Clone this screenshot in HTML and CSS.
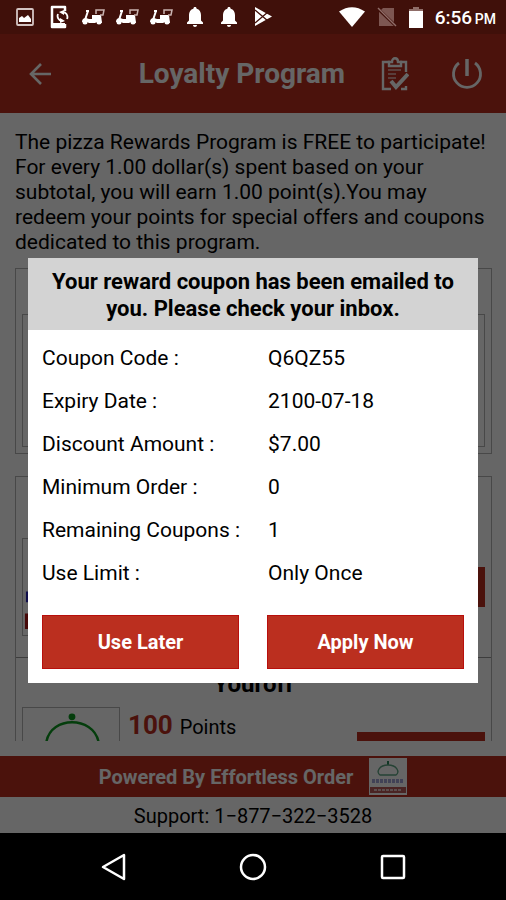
FILE: index.html
```html
<!DOCTYPE html>
<html lang="en">
<head>
<meta charset="utf-8">
<meta name="viewport" content="width=device-width, initial-scale=1">
<title>Loyalty Program</title>
<link rel="stylesheet" href="styles.css">
</head>
<body>
<svg class="defs" aria-hidden="true">
  <symbol id="scooter" viewBox="0 0 24 18">
    <path d="M5 3h3M7 3L4 12" fill="none" stroke="#fff" stroke-width="2"/>
    <path d="M1 14q0-4 4-4l3 1h3V7h9l1 8h-4l-1-1-2 1H8l-2-1z" fill="#fff"/>
    <path d="M15 6V2h8l-1 5h-3" fill="none" stroke="#c9b3b0" stroke-width="1.500"/>
    <circle cx="4" cy="14" r="2.500" fill="#fff"/><circle cx="18" cy="14" r="2.500" fill="#fff"/>
  </symbol>
  <symbol id="bell" viewBox="0 0 18 22">
    <path d="M9 1c1 0 1.600.7 1.600 1.700C13.500 3.400 15 6 15 9v5.500l2 2V18H1v-1.500l2-2V9c0-3 1.500-5.600 4.400-6.300C7.400 1.700 8 1 9 1zM7 19h4c0 1.200-.9 2-2 2s-2-.8-2-2z" fill="#fff"/>
  </symbol>
  <symbol id="cloche" viewBox="0 0 98 98">
    <circle cx="50" cy="9" r="3.500" fill="#0a9a1e"/>
    <path d="M24 34C29 8 71 8 77 34" fill="none" stroke="#0a9a1e" stroke-width="2.500"/>
    <path d="M22 36C28 48 72 48 79 36" fill="none" stroke="#0a9a1e" stroke-width="2"/>
    <path d="M3 59h92" stroke="#2a25b8" stroke-width="11" stroke-dasharray="4 2"/>
    <path d="M2 76h94v16H2z" fill="#b01818"/>
    <path d="M16 84h66" stroke="#fff" stroke-width="6" stroke-dasharray="5 2"/>
  </symbol>
  <symbol id="cloche-small" viewBox="0 0 38 37">
    <path d="M19 3v4" stroke="#2f8a5c" stroke-width="2"/>
    <path d="M11 17c-4-3-1-10 8-10s12 7 8 10z" fill="none" stroke="#5fa684" stroke-width="1.300"/>
    <path d="M3 23h32" stroke="#a3a5d8" stroke-width="4" stroke-dasharray="3 1"/>
    <path d="M1 29h36v6H1z" fill="#b85a58"/>
    <path d="M5 32h28" stroke="#e5c4c2" stroke-width="2" stroke-dasharray="3 1"/>
  </symbol>
</svg>

<div class="status">
  <div class="notices">
    <svg width="20" height="20" viewBox="0 0 20 20"><rect x="2" y="2" width="16" height="16" rx="1" fill="none" stroke="#d3c4c2" stroke-width="1.800"/><path d="M4 15v-4l3-2 2 2 4-3 3 4v3z" fill="#fff"/></svg>
    <svg width="20" height="24" viewBox="0 0 20 24"><path d="M16 6V2H3v20h13v-3" fill="none" stroke="#fff" stroke-width="2.500" stroke-linejoin="round"/><path d="M3 20h13" stroke="#fff" stroke-width="4"/><path d="M9 9a5 5 0 0 0 4 7M18 14a5 5 0 0 0-5-7" fill="none" stroke="#fff" stroke-width="1.800"/><path d="M11 13l5 3-5 2zM15 10l-5-3 5-2z" fill="#fff"/></svg>
    <svg width="24" height="18"><use href="#scooter"/></svg>
    <svg width="24" height="18"><use href="#scooter"/></svg>
    <svg width="24" height="18"><use href="#scooter"/></svg>
    <svg width="18" height="22"><use href="#bell"/></svg>
    <svg width="18" height="22"><use href="#bell"/></svg>
    <svg width="20" height="22" viewBox="0 0 20 22"><path d="M2 1l17 9.500L2 20z" fill="#fff"/><path d="M2 4l13 11M2 17L15 6" stroke="#40100a" stroke-width="1.300"/></svg>
  </div>
  <div class="device">
    <svg width="26" height="20" viewBox="0 0 26 20"><path d="M0 4.500Q13-4 26 4.500L13 20z" fill="#fff"/></svg>
    <svg width="20" height="20" viewBox="0 0 20 20"><path d="M6 1h11v18H2V5z" fill="#7d5752"/><path d="M0 1l19 18" stroke="#40100a" stroke-width="3"/><path d="M1 1l18 18" stroke="#8f6d68" stroke-width="1.500"/></svg>
    <svg width="14" height="21" viewBox="0 0 14 21"><path d="M4 0h6v2h4v3H0V2h4z" fill="#8f6d68"/><path d="M0 4h14v17H0z" fill="#fff"/></svg>
    <time class="clock">6:56 <small>PM</small></time>
  </div>
</div>

<div class="app">
  <header class="bar">
    <button class="icon-btn" aria-label="Back"><svg width="24" height="24" viewBox="0 0 24 24" fill="none" stroke="currentColor" stroke-width="2.600"><path d="M23 12H3M13 2L3 12l10 10"/></svg></button>
    <h1>Loyalty Program</h1>
    <button class="icon-btn" aria-label="Orders"><svg width="28" height="34" viewBox="0 0 28 34" fill="none" stroke="currentColor" stroke-width="2.400"><path d="M9 5H2v27h8M19 5h6v10M25 29v3h-5"/><path d="M8 9V5h3c0-5 6-5 6 0h3v4z"/><path d="M7 13h13M7 17h8M7 21h8" stroke-width="1.400" opacity=".7"/><path d="M10 24l5 6L27 17" stroke-width="4"/></svg></button>
    <button class="icon-btn" aria-label="Log out"><svg width="32" height="32" viewBox="0 0 32 32" fill="none" stroke="currentColor" stroke-width="2.800"><path d="M16 1v17" stroke-width="3.500"/><path d="M8 5a13.500 13.500 0 1 0 16 0"/></svg></button>
  </header>

  <main class="content">
    <p class="intro">The pizza Rewards Program is FREE to participate! For every 1.00 dollar(s) spent based on your subtotal, you will earn 1.00 point(s).You may redeem your points for special offers and coupons dedicated to this program.</p>
    <section class="card balance"><div class="panel"></div></section>
    <section class="card offers">
      <article class="offer first">
        <div class="thumb"><svg width="96" height="96"><use href="#cloche"/></svg></div>
        <div class="redeem"></div>
      </article>
      <article class="offer">
        <h2>Youroff</h2>
        <div class="offer-row">
          <div class="thumb"><svg width="96" height="96"><use href="#cloche"/></svg></div>
          <p class="points"><strong>100</strong> Points</p>
          <div class="redeem"></div>
        </div>
      </article>
    </section>
  </main>

  <footer>
    <div class="powered"><span>Powered By Effortless Order</span><svg class="logo" width="38" height="37"><use href="#cloche-small"/></svg></div>
    <p class="support">Support: 1−877−322−3528</p>
  </footer>

  <div class="overlay">
    <div class="dialog" role="dialog" aria-modal="true" aria-labelledby="dialog-title">
      <h2 id="dialog-title">Your reward coupon has been emailed to you. Please check your inbox.</h2>
      <dl>
        <dt>Coupon Code :</dt><dd>Q6QZ55</dd>
        <dt>Expiry Date :</dt><dd>2100-07-18</dd>
        <dt>Discount Amount :</dt><dd>$7.00</dd>
        <dt>Minimum Order :</dt><dd>0</dd>
        <dt>Remaining Coupons :</dt><dd>1</dd>
        <dt>Use Limit :</dt><dd>Only Once</dd>
      </dl>
      <div class="actions">
        <button>Use Later</button>
        <button>Apply Now</button>
      </div>
    </div>
  </div>
</div>

<nav class="system">
  <button aria-label="Back"><svg width="26" height="28" viewBox="0 0 26 28"><path d="M24 2v24L3 14z"/></svg></button>
  <button aria-label="Home"><svg width="28" height="28" viewBox="0 0 28 28"><circle cx="14" cy="14" r="12"/></svg></button>
  <button aria-label="Recent apps"><svg width="26" height="26" viewBox="0 0 26 26"><rect x="2" y="2" width="22" height="22" rx="1"/></svg></button>
</nav>
</body>
</html>
```

FILE: styles.css
```css
* {
  box-sizing: border-box;
  margin: 0;
}

body {
  display: flex;
  flex-direction: column;
  height: 100vh;
  background: #000;
  color: #000;
  font-family: Roboto, "Liberation Sans", sans-serif;
  font-size: 21px;
}

button {
  padding: 0;
  border: 0;
  background: none;
  color: inherit;
  font: inherit;
}

svg {
  display: block;
  flex: none;
}

.defs {
  position: absolute;
  width: 0;
  height: 0;
}

.status {
  display: flex;
  flex: none;
  justify-content: space-between;
  align-items: center;
  height: 34px;
  padding: 0 10px 0 8px;
  background: #40100a;
  color: #fff;
}

.notices {
  display: grid;
  grid-template-columns: repeat(8, 34px);
  justify-items: center;
  align-items: center;
}

.device {
  display: flex;
  align-items: center;
  gap: 12px;
}

.clock {
  font-size: 19px;
  font-weight: 500;
}

.clock small {
  margin-left: -2px;
  font-size: 14px;
}

.app {
  position: relative;
  display: flex;
  flex: 1;
  flex-direction: column;
  min-height: 0;
  background: #fff;
}

.bar {
  display: flex;
  flex: none;
  align-items: center;
  gap: 36px;
  height: 79px;
  padding: 0 23px 0 28px;
  background: #bb2f1f;
  color: #fff;
}

.bar h1 {
  flex: 1;
  text-align: right;
  font-size: 28px;
  font-weight: 700;
}

.bar .icon-btn + .icon-btn {
  margin-left: 6px;
}

.content {
  flex: 1;
  min-height: 0;
  margin-bottom: 15px;
  padding: 17px 14px 0 15px;
  overflow: hidden;
}

.intro {
  line-height: 25px;
}

.card {
  border: 1px solid #b4b4b4;
}

.balance {
  margin-top: 13px;
  padding: 45px 6px 6px;
}

.panel {
  height: 133px;
  border: 1px solid #b4b4b4;
}

.offers {
  margin-top: 22px;
}

.offer {
  padding: 0 6px;
}

.offer.first {
  display: flex;
  justify-content: space-between;
  align-items: center;
  padding-top: 61px;
  padding-bottom: 21px;
  border-bottom: 1px solid #999;
}

.offer h2 {
  padding: 14px 0 10px;
  line-height: 25px;
  text-align: center;
  font-size: 24px;
}

.offer-row {
  display: flex;
}

.thumb {
  border: 1px solid #b4b4b4;
}

.points {
  flex: 1;
  padding-left: 8px;
  line-height: 36px;
  font-size: 20px;
}

.points strong {
  margin-right: 2px;
  color: #bb2f1f;
  font-size: 26px;
}

.redeem {
  width: 128px;
  height: 40px;
  background: #bb2f1f;
}

.offer-row .redeem {
  margin-top: 25px;
}

footer {
  flex: none;
}

.powered {
  display: flex;
  justify-content: center;
  align-items: center;
  gap: 16px;
  height: 41px;
  background: #bb2f1f;
  color: #fff;
  font-size: 20px;
  font-weight: 700;
}

.logo {
  background: #fff;
}

.support {
  line-height: 38px;
  height: 36px;
  text-align: center;
  font-size: 20px;
}

.overlay {
  position: absolute;
  inset: 0;
  display: flex;
  justify-content: center;
  align-items: center;
  padding: 74px 28px 0;
  background: rgba(0, 0, 0, 0.6);
}

.dialog {
  flex: 1;
  background: #fff;
}

.dialog h2 {
  padding: 10px 16px 8px;
  background: #d3d3d3;
  line-height: 27px;
  text-align: center;
  font-size: 23px;
}

.dialog dl {
  display: grid;
  grid-template-columns: 1fr 1fr;
  column-gap: 28px;
  padding: 7px 14px 20px;
  line-height: 43px;
}

.dialog dd {
  margin: 0;
}

.dialog dt {
  white-space: nowrap;
}

.actions {
  display: grid;
  grid-template-columns: 1fr 1fr;
  gap: 28px;
  padding: 0 14px 14px;
}

.dialog h2 {
  font-size: 22px;
}

.actions button {
  height: 54px;
  border: 1px solid #b80f0c;
  background: #bb2f1f;
  color: #fff;
  font-size: 20px;
  font-weight: 700;
}

.system {
  display: flex;
  flex: none;
  justify-content: center;
  align-items: center;
  gap: 113px;
  height: 67px;
}

.system path,
.system circle,
.system rect {
  fill: none;
  stroke: #fff;
  stroke-width: 2.500;
  stroke-linejoin: round;
}
```
